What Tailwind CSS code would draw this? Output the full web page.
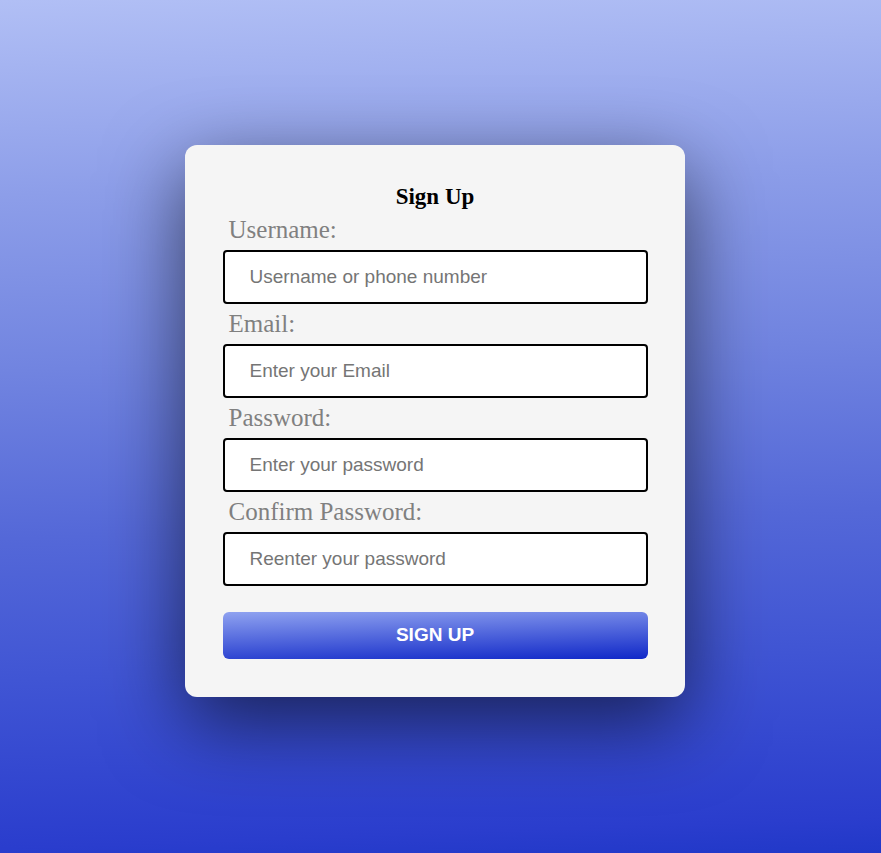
<!DOCTYPE html>
<html lang="en">
<head>
<meta charset="utf-8">
<title>Sign Up</title>
<script src="https://cdn.jsdelivr.net/npm/@tailwindcss/browser@4"></script>
</head>
<body class="flex min-h-screen items-center justify-center bg-[linear-gradient(178deg,#b1bff5,#8d9ee9_22%,#7184e0_42%,#5468d8_61%,#4055d4_77%,#2a3dcd_96%,#2138c8)] pt-6 pb-9 pr-3 font-['Liberation_Serif',serif]">
<form class="w-full max-w-[500px] rounded-xl bg-[#f5f5f5] pt-[38px] pr-[37px] pb-[38px] pl-[38px] shadow-[0_25px_80px_rgba(0,0,0,0.6)]">
<h1 class="text-center text-[23px] leading-[27px] font-bold text-black">Sign Up</h1>
<div>
<label for="username" class="block px-[6px] py-[5px] text-[25px] leading-[30px] text-[#808080]">Username:</label>
<input id="username" type="text" placeholder="Username or phone number" class="block h-[54px] w-full rounded border-2 border-black bg-white px-[25px] font-['Liberation_Sans',sans-serif] text-[19px] placeholder:text-[#757575]">
</div>
<div>
<label for="email" class="block px-[6px] py-[5px] text-[25px] leading-[30px] text-[#808080]">Email:</label>
<input id="email" type="email" placeholder="Enter your Email" class="block h-[54px] w-full rounded border-2 border-black bg-white px-[25px] font-['Liberation_Sans',sans-serif] text-[19px] placeholder:text-[#757575]">
</div>
<div>
<label for="password" class="block px-[6px] py-[5px] text-[25px] leading-[30px] text-[#808080]">Password:</label>
<input id="password" type="password" placeholder="Enter your password" class="block h-[54px] w-full rounded border-2 border-black bg-white px-[25px] font-['Liberation_Sans',sans-serif] text-[19px] placeholder:text-[#757575]">
</div>
<div>
<label for="confirm" class="block px-[6px] py-[5px] text-[25px] leading-[30px] text-[#808080]">Confirm Password:</label>
<input id="confirm" type="password" placeholder="Reenter your password" class="block h-[54px] w-full rounded border-2 border-black bg-white px-[25px] font-['Liberation_Sans',sans-serif] text-[19px] placeholder:text-[#757575]">
</div>
<button type="submit" class="mt-[26px] block h-[47px] w-full rounded-md bg-[linear-gradient(178deg,#8fa2f0,#1028c8)] font-['Liberation_Sans',sans-serif] text-[19px] font-bold text-white">SIGN UP</button>
</form>
</body>
</html>
